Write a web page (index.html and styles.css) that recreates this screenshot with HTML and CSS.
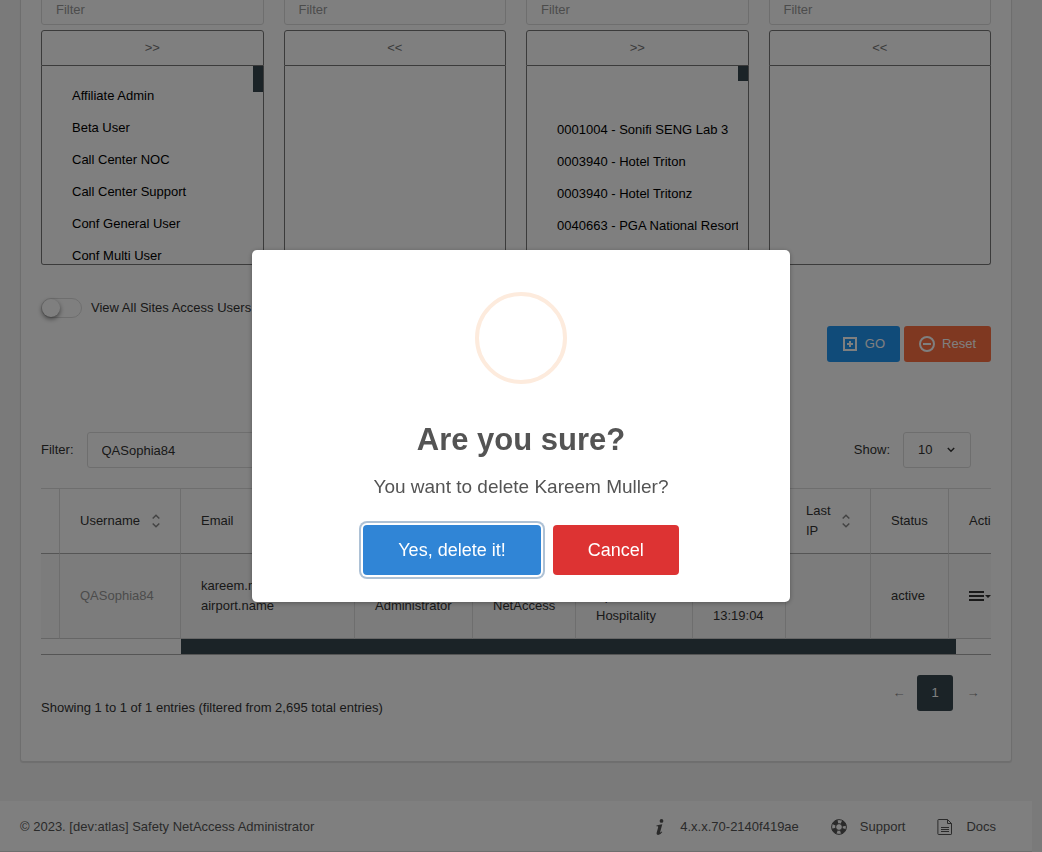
FILE: index.html
```html
<!DOCTYPE html>
<html lang="en">
<head>
<meta charset="utf-8">
<title>Safety NetAccess Administrator</title>
<link rel="stylesheet" href="styles.css">
</head>
<body>
<main class="panel">
  <form class="search-form">
    <div class="pickers">
      <div class="picker">
        <input class="field picker-field" type="text" placeholder="Filter" aria-label="Filter available roles">
        <button class="move" type="button">&gt;&gt;</button>
        <div class="list">
          <select class="options" multiple aria-label="Available roles">
            <option>Affiliate Admin</option>
            <option>Beta User</option>
            <option>Call Center NOC</option>
            <option>Call Center Support</option>
            <option>Conf General User</option>
            <option>Conf Multi User</option>
          </select>
          <div class="track"><div class="thumb thumb-tall"></div></div>
        </div>
      </div>
      <div class="picker">
        <input class="field picker-field" type="text" placeholder="Filter" aria-label="Filter selected roles">
        <button class="move" type="button">&lt;&lt;</button>
        <div class="list"><select class="options" multiple aria-label="Selected roles"></select></div>
      </div>
      <div class="picker">
        <input class="field picker-field" type="text" placeholder="Filter" aria-label="Filter available sites">
        <button class="move" type="button">&gt;&gt;</button>
        <div class="list">
          <select class="options" multiple aria-label="Available sites">
            <option class="blank"></option>
            <option>0001004 - Sonifi SENG Lab 3</option>
            <option>0003940 - Hotel Triton</option>
            <option>0003940 - Hotel Tritonz</option>
            <option>0040663 - PGA National Resort</option>
          </select>
          <div class="track"><div class="thumb thumb-short"></div></div>
        </div>
      </div>
      <div class="picker">
        <input class="field picker-field" type="text" placeholder="Filter" aria-label="Filter selected sites">
        <button class="move" type="button">&lt;&lt;</button>
        <div class="list"><select class="options" multiple aria-label="Selected sites"></select></div>
      </div>
    </div>
    <label class="switch-row"><input class="switch" type="checkbox">View All Sites Access Users</label>
    <div class="actions">
      <button class="btn btn-go" type="button">
        <svg class="icon" viewBox="0 0 16 16" fill="none" stroke="currentColor" stroke-width="2"><rect x="2" y="2" width="12" height="12"/><path d="M8 5v6M5 8h6"/></svg>
        GO
      </button>
      <button class="btn btn-reset" type="button">
        <svg class="icon" viewBox="0 0 16 16" fill="none" stroke="currentColor" stroke-width="2"><circle cx="8" cy="8" r="7"/><path d="M4 8h8"/></svg>
        Reset
      </button>
    </div>
  </form>

  <div class="tools">
    <label class="tool">Filter:<input class="field filter-field" type="text" value="QASophia84"></label>
    <label class="tool">Show:
      <span class="select-wrap">
        <select class="field count"><option>10</option></select>
        <svg class="chevron" viewBox="0 0 8 6" fill="none" stroke="currentColor" stroke-width="1.5"><path d="M.8 1l3.200 3.200L7.200 1"/></svg>
      </span>
    </label>
  </div>

  <div class="table-scroll">
    <table class="users">
      <colgroup><col class="w-lead"><col class="w-user"><col class="w-email"><col class="w-role"><col class="w-group"><col class="w-org"><col class="w-login"><col class="w-ip"><col class="w-status"><col class="w-act"></colgroup>
      <thead>
        <tr>
          <th></th>
          <th><div class="sortable">Username<svg class="sort" viewBox="0 0 8 14" fill="none" stroke="currentColor" stroke-width="1.500"><path d="M.7 4.500L4 1.200l3.300 3.300M.7 9.500L4 12.800l3.300-3.300"/></svg></div></th>
          <th>Email</th>
          <th>Role</th>
          <th>Group</th>
          <th>Company</th>
          <th>Login</th>
          <th><div class="sortable">Last<br>IP<svg class="sort" viewBox="0 0 8 14" fill="none" stroke="currentColor" stroke-width="1.500"><path d="M.7 4.500L4 1.200l3.300 3.300M.7 9.500L4 12.800l3.300-3.300"/></svg></div></th>
          <th>Status</th>
          <th>Actions</th>
        </tr>
      </thead>
      <tbody>
        <tr>
          <td></td>
          <td class="muted">QASophia84</td>
          <td>kareem.muller@<br>airport.name</td>
          <td>Safety<br>Administrator</td>
          <td>Safety<br>NetAccess</td>
          <td>Safety<br>Sports<br>Hospitality</td>
          <td>2023<br>03-14<br>13:19:04</td>
          <td></td>
          <td>active</td>
          <td>
            <button class="row-menu" type="button" aria-label="Row actions">
              <svg class="menu-icon" viewBox="0 0 22 12" fill="currentColor"><path d="M0 1h15v2H0zM0 5h15v2H0zM0 9h15v2H0zM16 5h6l-3 3z"/></svg>
            </button>
          </td>
        </tr>
      </tbody>
    </table>
    <div class="h-track"><div class="h-thumb"></div></div>
  </div>

  <div class="table-foot">
    <div class="info">Showing 1 to 1 of 1 entries (filtered from 2,695 total entries)</div>
    <nav class="pages" aria-label="Pages">
      <button class="page previous" type="button" aria-label="Previous">←</button>
      <button class="page current" type="button">1</button>
      <button class="page" type="button" aria-label="Next">→</button>
    </nav>
  </div>
</main>

<footer class="footer">
  <div>© 2023. [dev:atlas] Safety NetAccess Administrator</div>
  <nav class="links">
    <a class="link" href="#version"><svg class="icon" viewBox="0 0 16 16" fill="currentColor"><circle cx="10.500" cy="1.900" r="1.900"/><path d="M5.500 6.600Q8.500 5.600 11.300 5.200L9.300 12.600q-.3 1.300.3.900l1.100-1 .6.600Q9.500 16 7.200 16q-2.100 0-1.500-2.400l1.400-5.200q.3-1.100-.5-1.100H5.300z"/></svg>4.x.x.70-2140f419ae</a>
    <a class="link" href="#support"><svg class="icon" viewBox="0 0 16 16" fill="none" stroke="currentColor"><circle cx="8" cy="8" r="7.400"/><circle cx="8" cy="8" r="3.400"/><circle cx="8" cy="8" r="5.400" stroke-width="4" stroke-dasharray="4.880 3.600" stroke-dashoffset="-1.800"/></svg>Support</a>
    <a class="link" href="#docs"><svg class="icon" viewBox="0 0 16 16" fill="none" stroke="currentColor"><path d="M1.500.5h9l4 4v10.400q0 .6-.6.600H1.500q-.6 0-.6-.6V1.100q0-.6.600-.6zM10.500.5v4h4M4 8.500h8M4 10.500h8M4 12.500h8"/></svg>Docs</a>
  </nav>
</footer>

<div class="backdrop">
  <div class="dialog" role="dialog" aria-modal="true" aria-labelledby="dialog-title">
    <div class="dialog-icon"></div>
    <h2 class="dialog-title" id="dialog-title">Are you sure?</h2>
    <p class="dialog-text">You want to delete Kareem Muller?</p>
    <div class="dialog-actions">
      <button class="dialog-btn confirm" type="button">Yes, delete it!</button>
      <button class="dialog-btn cancel" type="button">Cancel</button>
    </div>
  </div>
</div>
</body>
</html>
```
FILE: styles.css
```css
* { box-sizing: border-box; }

body {
  display: flow-root;
  margin: 0;
  padding-right: 10px;
  background: #f5f5f5;
  color: #333;
  font: 13px/20px "Liberation Sans", Arial, sans-serif;
}

button, input, select { font: inherit; color: inherit; }

/* The page is scrolled a little way past the top of the panel. */
.panel {
  margin: -32px 20px 39px;
  padding: 20px 20px 50px;
  background: #fff;
  border: 1px solid #ddd;
  border-radius: 3px;
  box-shadow: 0 1px 1px rgba(0, 0, 0, .1);
}

.field {
  width: 100%;
  height: 36px;
  padding: 0 14px;
  background: #fff;
  border: 1px solid #ddd;
  border-radius: 3px;
}
.field::placeholder { color: #999; opacity: 1; }
.picker-field { padding-top: 4px; }

.pickers {
  display: grid;
  grid-template-columns: repeat(4, minmax(0, 1fr));
  gap: 20px;
}
.picker { display: flex; flex-direction: column; }
.move {
  height: 36px;
  margin-top: 5px;
  background: #fff;
  border: 1px solid #777;
  border-radius: 3px 3px 0 0;
  color: #777;
}
.list {
  display: flex;
  height: 199px;
  border: 1px solid #777;
  border-top: 0;
  border-radius: 0 0 3px 3px;
  overflow: hidden;
}
.options {
  flex: 1;
  min-width: 0;
  height: 100%;
  padding: 16px 0 0 15px;
  border: 0;
  background: #fff;
  color: #000;
  overflow: hidden;
}
.options option {
  min-height: 32px;
  padding: 6px 15px;
  line-height: 20px;
}
.options .blank { min-height: 34px; }
.track { width: 10px; }
.thumb { background: #37474f; }
.thumb-tall { height: 26px; }
.thumb-short { height: 15px; }

.switch-row {
  display: flex;
  align-items: center;
  gap: 9px;
  margin-top: 33px;
}
.switch {
  appearance: none;
  width: 41px;
  height: 20px;
  margin: 0;
  background: #fff;
  border: 1px solid #ddd;
  border-radius: 10px;
}
.switch::before {
  content: "";
  display: block;
  width: 18px;
  height: 18px;
  background: #fff;
  border-radius: 50%;
  box-shadow: 0 2px 5px rgba(0, 0, 0, .5);
}

.actions {
  display: flex;
  justify-content: flex-end;
  gap: 4px;
  margin-top: 8px;
}
.btn {
  display: flex;
  align-items: center;
  gap: 7px;
  height: 36px;
  padding: 0 15px;
  border: 0;
  border-radius: 3px;
  color: #fff;
}
.btn-go { background: #2196f3; }
.btn-reset { background: #ff7043; }
.icon { width: 16px; height: 16px; flex: none; }

.tools {
  display: flex;
  justify-content: space-between;
  margin: 70px 20px 20px 0;
}
.tool { display: flex; align-items: center; gap: 13px; }
.filter-field { width: 200px; }
.select-wrap { position: relative; }
.count { display: block; width: 68px; appearance: none; }
.chevron {
  position: absolute;
  top: 15px;
  right: 16px;
  width: 8px;
  height: 6px;
  pointer-events: none;
}

.table-scroll {
  overflow: hidden;
  border-top: 1px solid #ddd;
  border-bottom: 1px solid #aaa;
}
.users {
  width: 1018px;
  table-layout: fixed;
  border-collapse: separate;
  border-spacing: 0;
}
.w-lead { width: 18px; }
.w-user { width: 121px; }
.w-email { width: 174px; }
.w-role { width: 118px; }
.w-group { width: 103px; }
.w-org { width: 117px; }
.w-login { width: 93px; }
.w-ip { width: 85px; }
.w-status { width: 78px; }
.w-act { width: 111px; }
.users th, .users td {
  padding: 12px 20px;
  border-left: 1px solid #ddd;
  text-align: left;
  font-weight: 400;
  white-space: nowrap;
}
.users th:first-child, .users td:first-child { padding: 0; border-left: 0; }
.users th { height: 65px; border-bottom: 1px solid #aaa; }
.users td { height: 85px; border-bottom: 1px solid #ccc; background: #f8f8f8; }
.users .muted { color: #999; }
.sortable { display: flex; align-items: center; justify-content: space-between; }
.sort { width: 8px; height: 14px; color: #888; }
.row-menu { display: flex; padding: 0; border: 0; background: none; }
.menu-icon { width: 22px; height: 12px; }
.h-track { height: 15px; }
.h-thumb {
  width: 81.6%;
  height: 100%;
  margin-left: 14.7%;
  background: #37474f;
}

.table-foot {
  display: flex;
  justify-content: space-between;
  align-items: flex-end;
  margin-top: 20px;
}
.info { margin-bottom: -7px; }
.pages { display: flex; gap: 2px; }
.page {
  width: 36px;
  height: 36px;
  padding: 0;
  border: 0;
  border-radius: 3px;
  background: none;
  color: #888;
}
.previous { padding-left: 4px; }
.current { background: #37474f; color: #fff; }

.footer {
  display: flex;
  justify-content: space-between;
  padding: 16px 36px 14px 20px;
  background: #fff;
  border-bottom: 1px solid #ddd;
  color: #555;
}
.links { display: flex; gap: 32px; }
.link {
  display: flex;
  align-items: center;
  gap: 13px;
  color: inherit;
  text-decoration: none;
}

.backdrop {
  position: fixed;
  inset: 0;
  display: grid;
  place-items: center;
  background: rgba(0, 0, 0, .5);
}
.dialog {
  display: flex;
  flex-direction: column;
  align-items: center;
  width: 538px;
  max-width: 100%;
  padding: 42px 20px 27px;
  background: #fff;
  border-radius: 5px;
  box-shadow: 0 1px 5px rgba(0, 0, 0, .3);
  color: #545454;
}
.dialog-icon {
  width: 92px;
  height: 92px;
  border: 4px solid #fdebdd;
  border-radius: 50%;
}
.dialog-title { margin: 36px 0 0; font-size: 31px; line-height: 40px; }
.dialog-text { margin: 15px 0 0; font-size: 19px; line-height: 24px; }
.dialog-actions { display: flex; gap: 12px; margin-top: 26px; }
.dialog-btn {
  height: 50px;
  padding: 0 35px;
  border: 0;
  border-radius: 4px;
  color: #fff;
  font-size: 18px;
}
.confirm {
  background: #3085d6;
  box-shadow: 0 0 0 2px #fff, 0 0 0 4px rgba(50, 100, 150, .4);
}
.cancel { background: #d33; }
```
